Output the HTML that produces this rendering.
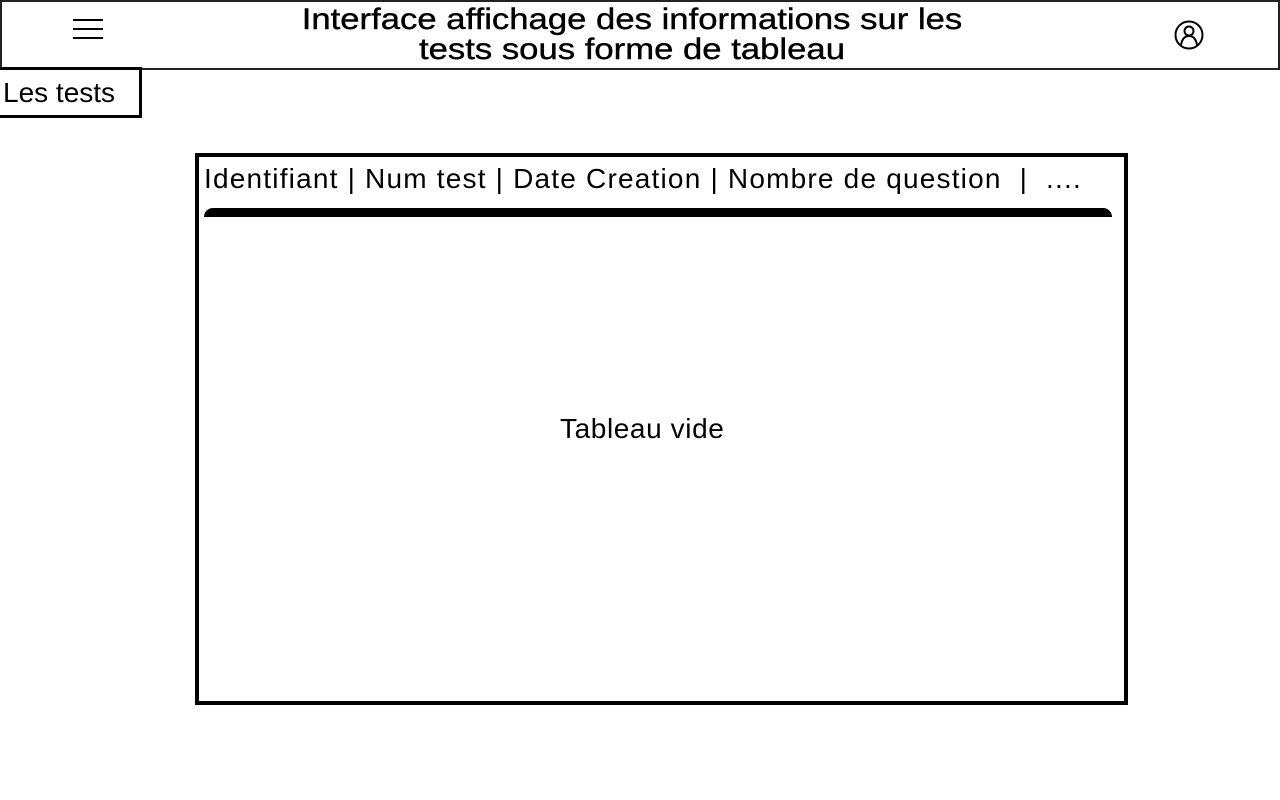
<!DOCTYPE html>
<html><head><meta charset="utf-8"><style>
body{margin:0;width:1280px;height:800px;background:#fff;position:relative;overflow:hidden;font-family:"Liberation Sans",sans-serif;color:#000}
.hdr{position:absolute;left:0;top:0;width:1276px;height:66px;border:2px solid #222}
.title{position:absolute;left:280px;top:3px;width:700px;text-align:center;font-size:30px;line-height:30px;transform:scaleX(1.156);transform-origin:350px 0;-webkit-text-stroke:0.4px #000}
.burger{position:absolute;left:71px;top:17px;width:30px}
.burger div{height:2px;background:#000;margin-bottom:7px}
.tab{position:absolute;left:-3px;top:67px;width:139px;height:45px;border:3px solid #000}
.tab span{position:absolute;left:3px;top:7px;font-size:28px}
.box{position:absolute;left:195px;top:153px;width:925px;height:544px;border:4px solid #000}
.cols{position:absolute;left:5px;top:6px;font-size:28px;white-space:nowrap;letter-spacing:1.2px}
.bar{position:absolute;left:5px;top:51px;width:908px;height:9px;background:#000;border-radius:14px 14px 0 0}
.empty{position:absolute;left:361px;top:256px;font-size:28px;letter-spacing:0.6px}
</style></head><body>
<div class="hdr">
<div class="burger"><div></div><div></div><div></div></div>
<div class="title">Interface affichage des informations sur les<br>tests sous forme de tableau</div>
<svg style="position:absolute;left:1171px;top:17px" width="32" height="32" viewBox="0 0 32 32" fill="none" stroke="#000" stroke-width="2"><circle cx="16" cy="16" r="13.5"/><circle cx="16" cy="12" r="4.5"/><path d="M8 26 C9 20 12 17 16 17 C20 17 23 20 24 26"/></svg>
</div>
<div class="tab"><span>Les tests</span></div>
<div class="box">
<div class="cols">Identifiant | Num test | Date Creation | Nombre de question &nbsp;| &nbsp;....</div>
<div class="bar"></div>
<div class="empty">Tableau vide</div>
</div>
</body></html>
